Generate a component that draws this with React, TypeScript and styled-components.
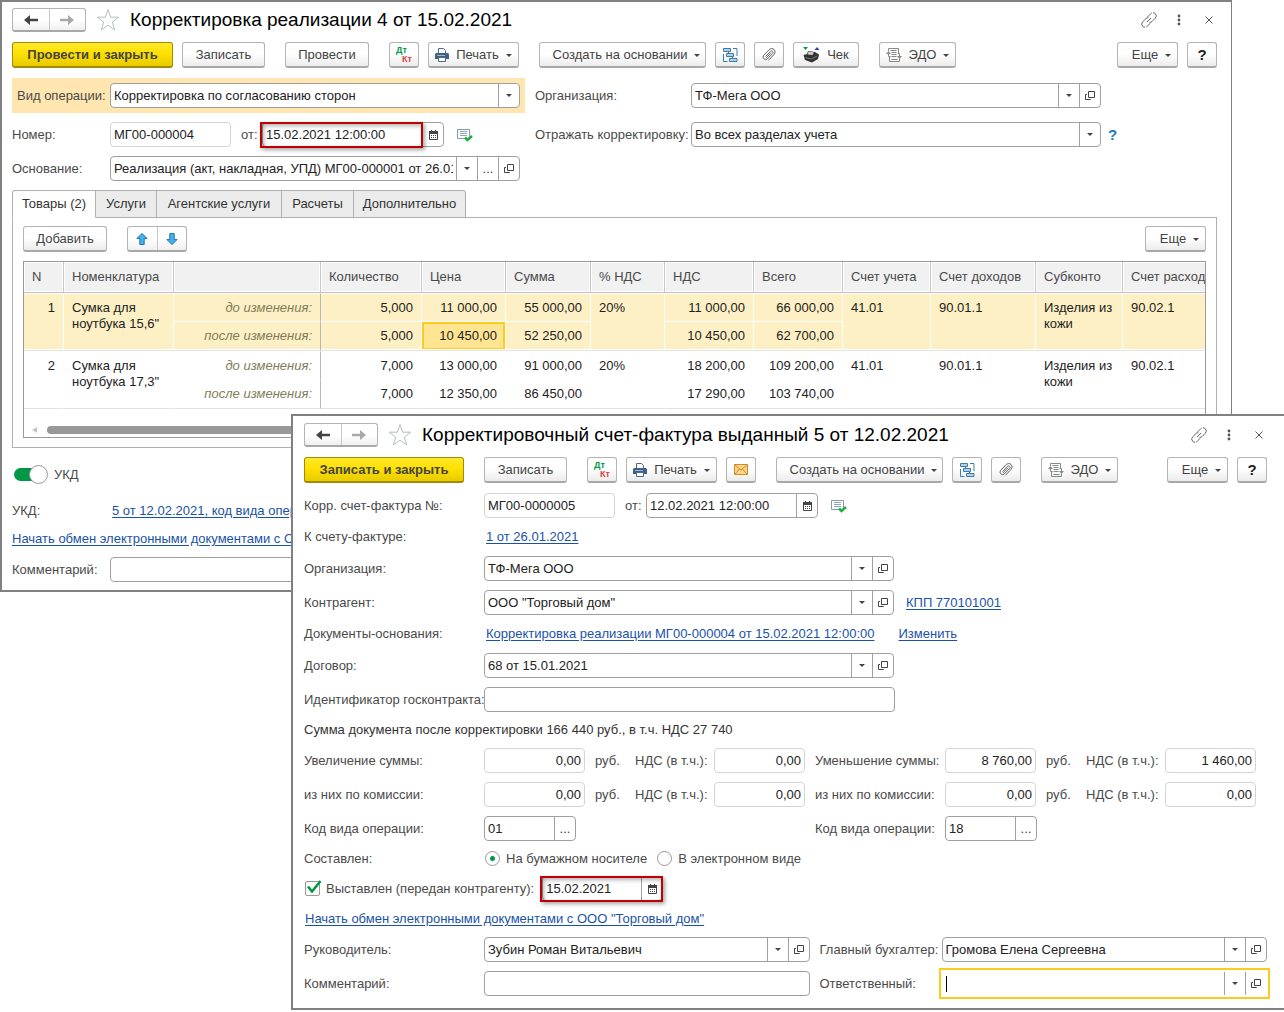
import React from 'react';
import styled, { createGlobalStyle, css } from 'styled-components';

const GlobalStyle = createGlobalStyle`
  *, *::before, *::after { box-sizing: border-box; }
  body { margin: 0; background: #fff; }
  body, button, input, select {
    font-family: "Liberation Sans", Arial, sans-serif;
    font-size: 13px;
    line-height: 16px;
  }
`;

/* ---------- windows ---------- */

const Desktop = styled.div`
  position: relative;
  min-height: 100vh;
  overflow: hidden;
  color: #333;
`;

const BackWindow = styled.section`
  width: calc(100% - 52px);
  border: solid #808080;
  border-width: 2px 1px 2px 2px;
  padding: 6px 14px 8px 10px;
  background: #fff;
`;

const FrontWindow = styled.section`
  position: absolute;
  top: 414px;
  left: 291px;
  right: 0;
  border: solid #808080;
  border-width: 2px 0 2px 2px;
  padding: 7px 17px 12px 11px;
  background: #fff;
`;

const TitleBar = styled.header`
  display: flex;
  align-items: center;
  height: 24px;
  margin-bottom: 10px;
`;

const NavGroup = styled.div`
  display: flex;
  width: 74px;
  height: 24px;
  border: 1px solid #b4b4b4;
  border-bottom: 2px solid #a8a8a8;
  border-radius: 3px;
  background: linear-gradient(#fff 50%, #f0f0f0);
`;

const NavButton = styled.button`
  flex: 1;
  display: grid;
  place-items: center;
  padding: 0;
  border: 0;
  background: none;
  & + & { border-left: 1px solid #c8c8c8; }
`;

const PlainButton = styled.button`
  display: grid;
  place-items: center;
  width: 16px;
  height: 24px;
  padding: 0;
  border: 0;
  background: none;
  color: #4d4d4d;
`;

const StarButton = styled(PlainButton)`
  width: 24px;
  margin: 0 10px;
`;

const Title = styled.h1`
  flex: 1;
  margin: 0;
  font-size: 19px;
  font-weight: 400;
  line-height: 24px;
  color: #000;
  white-space: nowrap;
`;

const WindowTools = styled.div`
  display: flex;
  gap: 14px;
`;

/* ---------- toolbar ---------- */

const Toolbar = styled.div`
  display: flex;
  gap: 9px;
  height: 26px;
  margin-bottom: 10px;
`;

const ToolGroup = styled.div<{ $push?: boolean }>`
  display: flex;
  gap: 9px;
  margin-left: ${p => (p.$push ? 'auto' : '11px')};
  &:first-child { margin-left: 0; }
`;

const Button = styled.button<{ $w: number; $primary?: boolean; $strong?: boolean; $menu?: boolean }>`
  display: flex;
  align-items: center;
  justify-content: center;
  gap: 7px;
  width: ${p => p.$w}px;
  height: 26px;
  padding: 0 0 0 ${p => (p.$menu ? 8 : 0)}px;
  border: 1px solid #b4b4b4;
  border-bottom: 2px solid #a8a8a8;
  border-radius: 3px;
  background: linear-gradient(#fff 45%, #ececec);
  color: #444;
  white-space: nowrap;
  ${p => p.$strong && css`
    font-size: 15px;
    font-weight: 700;
    color: #222;
  `}
  ${p => p.$primary && css`
    border-color: #a28b00;
    background: linear-gradient(#ffe92e, #ffe000 45%, #e8cb00);
    font-weight: 700;
  `}
`;

const Caret = styled.span<{ $tight?: boolean }>`
  width: 0;
  height: 0;
  border: solid transparent;
  border-width: 3px 3px 0;
  border-top-color: #444;
  ${p => !p.$tight && 'margin-top: 2px;'}
`;

/* ---------- form parts ---------- */

const Form = styled.div`
  display: flex;
  flex-direction: column;
  gap: 9px;
`;

const Row = styled.div<{ $h?: number }>`
  display: flex;
  align-items: center;
  height: ${p => p.$h ?? 25}px;
`;

const TwoColumns = styled.div`
  display: grid;
  grid-template-columns: 513px 1fr;
  column-gap: 10px;
  align-items: center;
`;

const Band = styled.div`
  display: flex;
  align-items: center;
  height: 35px;
  padding: 0 5px;
  background: #ffe5b0;
`;

const caption = css<{ $w?: number; $pad?: number }>`
  flex: none;
  width: ${p => (p.$w ? `${p.$w}px` : 'auto')};
  padding-left: ${p => p.$pad ?? 0}px;
  color: #4a4a4a;
  white-space: nowrap;
`;

const Label = styled.label<{ $w?: number; $pad?: number }>`${caption}`;
const Caption = styled.span<{ $w?: number; $pad?: number }>`${caption}`;

const Box = styled.div<{ $w?: number; $muted?: boolean; $focused?: boolean }>`
  position: relative;
  display: flex;
  align-items: stretch;
  ${p => (p.$w ? `flex: none; width: ${p.$w}px;` : 'flex: 1; min-width: 0;')}
  height: 25px;
  border: 1px solid ${p => (p.$muted ? '#d4d4d4' : '#a0a0a0')};
  border-radius: 4px;
  background: #fff;
  ${p => p.$focused && css`
    border-color: transparent;
    border-radius: 0;
    outline: 2px solid #fbcb1e;
    outline-offset: 1px;
  `}
`;

const TextCursor = styled.span`
  flex: none;
  align-self: center;
  width: 1px;
  height: 16px;
  margin-left: 3px;
  background: #000;
`;

const Input = styled.input<{ $right?: boolean }>`
  flex: 1;
  min-width: 0;
  padding: 0 3px;
  border: 0;
  outline: 0;
  background: none;
  color: #222;
  text-align: ${p => (p.$right ? 'right' : 'left')};
`;

const Select = styled.select`
  flex: 1;
  min-width: 0;
  padding: 0 3px;
  border: 0;
  outline: 0;
  appearance: none;
  background: none;
  color: #222;
`;

const cell = css`
  flex: none;
  display: grid;
  place-items: center;
  width: 21px;
  padding: 0;
  border: 0;
  border-left: 1px solid #a0a0a0;
  background: none;
  color: #444;
`;

const CellButton = styled.button`${cell}`;
const CellMark = styled.span`${cell} pointer-events: none;`;

const Highlight = styled.span<{ $w: number }>`
  position: absolute;
  top: -1px;
  left: -3px;
  width: ${p => p.$w}px;
  height: 26px;
  border: 2px solid #c00000;
  box-shadow: 2px 2px 4px rgba(0, 0, 0, 0.35), inset 2px 2px 4px rgba(0, 0, 0, 0.3);
  pointer-events: none;
`;

const Link = styled.a<{ $gap?: number }>`
  margin-left: ${p => p.$gap ?? 0}px;
  color: #1a52a8;
  text-decoration: underline;
  text-underline-offset: 2px;
  white-space: nowrap;
`;

const HelpLink = styled.a`
  margin-left: 7px;
  font-size: 15px;
  font-weight: 700;
  color: #1a7bc4;
  text-decoration: none;
`;

const IconSlot = styled.span`
  display: grid;
  margin-left: 13px;
`;

const DateSlot = styled.span`
  display: grid;
  margin-left: 8px;
`;

/* ---------- tabs and table ---------- */

const TabList = styled.div`
  display: flex;
  height: 28px;
  margin: 9px 0 -1px;
`;

const Tab = styled.button<{ $w: number; $active?: boolean }>`
  width: ${p => p.$w}px;
  padding: 0;
  border: 1px solid #b0b0b0;
  border-left-width: 0;
  background: #ebebeb;
  color: #333;
  white-space: nowrap;
  &:first-child { border-left-width: 1px; border-top-left-radius: 3px; }
  &:last-child { border-top-right-radius: 3px; }
  ${p => p.$active && css`
    position: relative;
    border-bottom-color: #fff;
    background: #fff;
  `}
`;

const TabPanel = styled.div`
  border: 1px solid #b0b0b0;
  padding: 8px 10px 9px;
`;

const PanelTools = styled.div`
  display: flex;
  justify-content: space-between;
  margin-bottom: 9px;
`;

const PanelToolsLeft = styled.div`
  display: flex;
  gap: 20px;
`;

const MoveGroup = styled(NavGroup)`
  width: 60px;
  height: 26px;
`;

const TableFrame = styled.div`
  overflow: hidden;
  border: 1px solid #9a9a9a;
`;

const Table = styled.table`
  width: 1208px;
  table-layout: fixed;
  border-collapse: separate;
  border-spacing: 0;
`;

const Th = styled.th`
  height: 31px;
  padding: 0 8px;
  border-right: 1px solid #c8c8c8;
  border-bottom: 1px solid #c0c0c0;
  box-shadow: inset 0 0 0 1px #fff;
  background: #f1f1f1;
  color: #4a4a4a;
  font-weight: 400;
  text-align: left;
  white-space: nowrap;
`;

const Td = styled.td<{
  $sel?: boolean; $top?: boolean; $end?: boolean; $num?: boolean; $note?: boolean; $current?: boolean;
}>`
  height: 29px;
  padding: 6px 8px 0;
  border: 0 solid #fff;
  border-right-width: 1px;
  border-top-width: ${p => (p.$top ? 1 : 0)}px;
  border-bottom: 1px solid ${p => (p.$end ? '#e2e2e2' : '#fff')};
  ${p => p.$end && 'box-shadow: inset 0 -1px #fff;'}
  background: ${p => (p.$sel ? '#fdf0c5' : '#fff')};
  color: #222;
  text-align: ${p => (p.$num ? 'right' : 'left')};
  vertical-align: top;
  ${p => p.$note && css`
    border-right-color: #b8b8b8;
    color: #827c58;
    font-style: italic;
    text-align: right;
  `}
  ${p => p.$current && css`
    background: #ffe591;
    box-shadow: inset 0 -1px #fff, inset 0 0 0 2px #fbcb1e;
  `}
`;

const ScrollRow = styled.div`
  display: flex;
  align-items: center;
  gap: 10px;
  padding: 17px 10px 3px 8px;
`;

const ScrollArrow = styled.span`
  border: solid transparent;
  border-width: 3px 5px 3px 0;
  border-right-color: #c4c4c4;
`;

const ScrollThumb = styled.div`
  width: 75%;
  height: 8px;
  border-radius: 4px;
  background: #999;
`;

/* ---------- footer and choices ---------- */

const Footer = styled.div`
  display: flex;
  flex-direction: column;
  gap: 8px;
  margin-top: 17px;
`;

const SwitchLabel = styled.label`
  display: flex;
  align-items: center;
  gap: 6px;
  height: 19px;
  margin: 0 0 9px 2px;
  color: #4a4a4a;
`;

const Switch = styled.input`
  appearance: none;
  display: grid;
  align-items: center;
  width: 34px;
  height: 19px;
  margin: 0;
  &::before {
    content: "";
    grid-area: 1 / 1;
    width: 28px;
    height: 13px;
    border-radius: 7px;
    background: #009846;
  }
  &::after {
    content: "";
    grid-area: 1 / 1;
    justify-self: end;
    width: 19px;
    height: 19px;
    border: 1px solid #999;
    border-radius: 50%;
    background: #fff;
  }
`;

const ChoiceLabel = styled.label<{ $gap?: number }>`
  display: flex;
  align-items: center;
  gap: 6px;
  margin-left: ${p => p.$gap ?? 0}px;
  color: #4a4a4a;
  white-space: nowrap;
`;

const Radio = styled.input`
  appearance: none;
  width: 15px;
  height: 15px;
  margin: 0;
  border: 1px solid #999;
  border-radius: 50%;
  background: #fff;
  &:checked { background: radial-gradient(circle, #009846 0 2px, #fff 3px); }
`;

const CheckWrap = styled.span`
  display: grid;
  width: 15px;
  height: 15px;
  & > * { grid-area: 1 / 1; }
  & > svg { overflow: visible; pointer-events: none; }
`;

const CheckInput = styled.input`
  appearance: none;
  width: 15px;
  height: 15px;
  margin: 0;
  border: 1px solid #999;
  border-radius: 2px;
`;

const SumGrid = styled.div`
  display: grid;
  grid-template-columns: 180px 101px 50px 79px 91px 140px 91px 50px 79px 91px;
  align-items: center;
  height: 25px;
`;

const SumBox = styled(Box)<{ $col?: number }>`
  ${p => p.$col && `grid-column: ${p.$col};`}
`;

const SecondCodeLabel = styled(Label)`
  grid-column: 6;
`;

/* ---------- icons ---------- */

const Arrow = ({ right }: { right?: boolean }) => (
  <svg width="14" height="12" viewBox="0 0 14 12" aria-hidden="true">
    {right
      ? <path d="M0 4.8h8V1l6 5-6 5V7.2H0z" fill="#a8a8a8" />
      : <path d="M14 4.8H6V1L0 6l6 5V7.2h8z" fill="#444" />}
  </svg>
);

const StarIcon = () => (
  <svg width="24" height="24" viewBox="0 0 24 24" aria-hidden="true">
    <path d="M12 1.5l2.7 7.7h8l-6.4 4.9 2.4 7.9-6.7-4.8L5.3 22l2.4-7.9L1.3 9.2h8z" fill="#fff" stroke="#b4bcc4" />
  </svg>
);

const ChainIcon = () => (
  <svg width="16" height="16" viewBox="0 0 16 16" fill="none" stroke="#666" aria-hidden="true">
    <path d="M6.5 5l3.3-3.300a3 3 0 0 1 4.500 4.500L11 9.500a3 3 0 0 1-2.500.8M9.500 11l-3.300 3.300a3 3 0 0 1-4.500-4.500L5 6.500a3 3 0 0 1 2.500-.8M6 10l4-4" strokeDasharray="6 1 20 1" />
  </svg>
);

const DotsIcon = () => (
  <svg width="4" height="12" viewBox="0 0 4 12" fill="#555" aria-hidden="true">
    <circle cx="2" cy="2" r="1.4" /><circle cx="2" cy="6" r="1.4" /><circle cx="2" cy="10" r="1.4" />
  </svg>
);

const CloseIcon = () => (
  <svg width="8" height="8" viewBox="0 0 8 8" stroke="#555" aria-hidden="true">
    <path d="M.5.5l7 7M7.5.5l-7 7" />
  </svg>
);

const PostingBadge = styled.span`
  display: grid;
  width: 16px;
  font-size: 9px;
  font-weight: 700;
  line-height: 9px;
  color: #009846;
  text-align: left;
`;

const PostingCredit = styled.span`
  color: #e04040;
  text-align: right;
`;

const PrinterIcon = () => (
  <svg width="14" height="14" viewBox="0 0 14 14" aria-hidden="true">
    <path d="M3.5 5V.5h5l2 2V5" fill="#fff" stroke="#4a6a8a" />
    <path d="M1.5 5h11A1.5 1.5 0 0 1 14 6.5V11H0V6.5A1.5 1.5 0 0 1 1.5 5z" fill="#3f6184" />
    <path d="M2 7.5h8" stroke="#9fb6cc" />
    <path d="M3.5 9.5h7v4h-7z" fill="#fff" stroke="#4a6a8a" />
  </svg>
);

const StructureIcon = () => (
  <svg width="15" height="14" viewBox="0 0 15 14" fill="none" stroke="#3d7dad" aria-hidden="true">
    <path d="M10 .5h4v7.500M.5 6v7.500h4M5.500 3.500v2M9.500 8.500v2" />
    <path d="M.5.5h7v3h-7zM3.500 5.500h7v3h-7zM6.500 10.500h7.500v3H6.500z" fill="#b0d0e8" />
  </svg>
);

const ClipIcon = () => (
  <svg width="14" height="14" viewBox="0 0 14 14" fill="none" stroke="#666" aria-hidden="true">
    <path d="M3.500 8.500l5-5.200a1.500 1.500 0 0 1 2.200 2.100L5.300 11a2.600 2.600 0 0 1-3.700-3.600l5.800-6a3.400 3.400 0 0 1 4.900 4.700L6.500 12.300" />
    <path d="M4.200 9.800l5-5.200" />
  </svg>
);

const ReceiptIcon = () => (
  <svg width="17" height="16" viewBox="0 0 17 16" aria-hidden="true">
    <path d="M0 0h5L2.500 3z" fill="#00a050" />
    <path d="M11.500 3h5L14 0z" fill="#3040c0" />
    <path d="M.5 8L4 7l1-3 7 1 4 2.500-1 4.500-6 3.500L2 13z" fill="#333" />
    <path d="M5.500 4.500l5.500 1-1.500 2.500-5-.5z" fill="#ccc" />
    <path d="M2.500 10.500l6 1.500 5.500-3" stroke="#777" fill="none" />
  </svg>
);

const EdiIcon = () => (
  <svg width="16" height="16" viewBox="0 0 16 16" fill="none" stroke="#888" aria-hidden="true">
    <path d="M2.500 4V1.500h10V6M13.500 12v2.500h-10V10M4.500 3.500h6M5.500 5.500h5M5.500 7.500h5M5.500 9.500h5M5.500 12.500h6" />
    <path d="M2.500 7v2.500h2M13.500 9V6.500h-2" />
    <path d="M2.500 4L5 7H0zM13.500 12L11 9h5z" fill="#888" stroke="none" />
  </svg>
);

const MailIcon = () => (
  <svg width="14" height="11" viewBox="0 0 14 11" aria-hidden="true">
    <path d="M.5.5h13v10H.5z" fill="#fbd58a" stroke="#d08a28" />
    <path d="M1 1l6 5 6-5M1 10l4.5-5M13 10L8.5 5" fill="none" stroke="#d08a28" />
  </svg>
);

const CalendarIcon = () => (
  <svg width="9" height="10" viewBox="0 0 9 10" aria-hidden="true">
    <path d="M.5 1.5h8v8h-8z" fill="#fff" stroke="#444" />
    <path d="M0 1h9v3H0zM2 0h1v2H2zM6 0h1v2H6z" fill="#444" />
    <path d="M2 5.5h1M4 5.5h1M6 5.5h1M2 7.5h1M4 7.5h1M6 7.5h1" stroke="#444" />
  </svg>
);

const OpenIcon = () => (
  <svg width="10" height="10" viewBox="0 0 10 10" fill="none" stroke="#444" aria-hidden="true">
    <path d="M3.5.5h6v6h-6zM2 3.5H.5v5h5V8" />
  </svg>
);

const PostedIcon = () => (
  <svg width="16" height="14" viewBox="0 0 16 14" fill="none" aria-hidden="true">
    <path d="M.5 1.5h12v9H.5z" stroke="#8899b0" fill="#fff" />
    <path d="M3 3.5h7M3 5.5h7M3 7.5h7" stroke="#8ca8c0" />
    <path d="M8 9.500l2.500 2.500L15 8" stroke="#20b040" strokeWidth="2.500" />
  </svg>
);

const MoveIcon = ({ down }: { down?: boolean }) => (
  <svg width="12" height="12" viewBox="0 0 12 12" aria-hidden="true">
    <path
      d={down ? 'M6 11.5L.8 6.5h3v-6h4.4v6h3z' : 'M6 .5L.8 5.5h3v6h4.4v-6h3z'}
      fill="#3fb0f0" stroke="#2878a8"
    />
  </svg>
);

const CheckIcon = () => (
  <svg width="15" height="15" viewBox="0 0 15 15" fill="none" aria-hidden="true">
    <path d="M3 5.500l4 5L15.500 0" stroke="#009846" strokeWidth="2.500" />
  </svg>
);

/* ---------- composed controls ---------- */

type FieldProps = {
  id: string; value?: string; w?: number; muted?: boolean; right?: boolean; focused?: boolean;
  tools?: Array<'drop' | 'more' | 'open' | 'date'>; mark?: number; col?: number;
};

const toolNames = { drop: 'Выбрать из списка', more: 'Показать все', open: 'Открыть', date: 'Календарь' };

function Field({ id, value = '', w, muted, right, focused, tools = [], mark, col }: FieldProps) {
  return (
    <SumBox $w={w} $muted={muted} $focused={focused} $col={col}>
      {focused && <TextCursor />}
      <Input id={id} defaultValue={value} $right={right} readOnly={muted} />
      {tools.map(t => (
        <CellButton key={t} type="button" aria-label={toolNames[t]}>
          {t === 'drop' && <Caret $tight />}
          {t === 'more' && '...'}
          {t === 'open' && <OpenIcon />}
          {t === 'date' && <CalendarIcon />}
        </CellButton>
      ))}
      {mark && <Highlight $w={mark} />}
    </SumBox>
  );
}

function Choice({ id, value, w }: { id: string; value: string; w: number }) {
  return (
    <Box $w={w}>
      <Select id={id}><option>{value}</option></Select>
      <CellMark><Caret $tight /></CellMark>
    </Box>
  );
}

function WindowTitle({ children }: { children: React.ReactNode }) {
  return (
    <TitleBar>
      <NavGroup>
        <NavButton type="button" aria-label="Назад"><Arrow /></NavButton>
        <NavButton type="button" aria-label="Вперед"><Arrow right /></NavButton>
      </NavGroup>
      <StarButton type="button" aria-label="В избранное"><StarIcon /></StarButton>
      <Title>{children}</Title>
      <WindowTools>
        <PlainButton type="button" aria-label="Получить ссылку"><ChainIcon /></PlainButton>
        <PlainButton type="button" aria-label="Меню"><DotsIcon /></PlainButton>
        <PlainButton type="button" aria-label="Закрыть"><CloseIcon /></PlainButton>
      </WindowTools>
    </TitleBar>
  );
}

const PostingButton = () => (
  <Button $w={30} type="button">
    <PostingBadge>Дт<PostingCredit>Кт</PostingCredit></PostingBadge>
  </Button>
);
const PrintButton = () => <Button $w={91} type="button"><PrinterIcon />Печать<Caret /></Button>;
const CreateButton = () => <Button $w={167} $menu type="button">Создать на основании<Caret /></Button>;
const StructureButton = () => <Button $w={30} type="button" aria-label="Структура подчиненности"><StructureIcon /></Button>;
const ClipButton = () => <Button $w={30} type="button" aria-label="Присоединенные файлы"><ClipIcon /></Button>;
const EdiButton = () => <Button $w={77} type="button"><EdiIcon />ЭДО<Caret /></Button>;
const MoreButton = () => <Button $w={61} $menu type="button">Еще<Caret /></Button>;

/* ---------- data ---------- */

const columnWidths = [40, 110, 147, 101, 84, 85, 74, 89, 89, 88, 105, 87];
const columns = ['N', 'Номенклатура', '', 'Количество', 'Цена', 'Сумма', '% НДС', 'НДС', 'Всего',
  'Счет учета', 'Счет доходов', 'Субконто', 'Счет расходов'];

const goods = [
  {
    n: 1, name: 'Сумка для ноутбука 15,6"', vatRate: '20%', selected: true,
    before: ['5,000', '11 000,00', '55 000,00', '11 000,00', '66 000,00'],
    after: ['5,000', '10 450,00', '52 250,00', '10 450,00', '62 700,00'],
  },
  {
    n: 2, name: 'Сумка для ноутбука 17,3"', vatRate: '20%', selected: false,
    before: ['7,000', '13 000,00', '91 000,00', '18 200,00', '109 200,00'],
    after: ['7,000', '12 350,00', '86 450,00', '17 290,00', '103 740,00'],
  },
];

const sums = [
  { id: 'inc', up: 'Увеличение суммы:', down: 'Уменьшение суммы:', v: ['0,00', '0,00', '8 760,00', '1 460,00'] },
  { id: 'com', up: 'из них по комиссии:', down: 'из них по комиссии:', v: ['0,00', '0,00', '0,00', '0,00'] },
];

const tabs: Array<[string, number]> = [
  ['Товары (2)', 84], ['Услуги', 61], ['Агентские услуги', 125], ['Расчеты', 72], ['Дополнительно', 112],
];

function GoodsTable() {
  return (
    <TableFrame>
      <Table>
        <colgroup>
          {columnWidths.map((w, i) => <col key={i} width={w} />)}
          <col />
        </colgroup>
        <thead>
          <tr>{columns.map((c, i) => <Th key={i}>{c}</Th>)}</tr>
        </thead>
        <tbody>
          {goods.map(g => {
            const full = { rowSpan: 2, $sel: g.selected, $top: true, $end: true };
            const top = { $sel: g.selected, $top: true };
            const end = { $sel: g.selected, $end: true };
            return (
              <React.Fragment key={g.n}>
                <tr>
                  <Td {...full} $num>{g.n}</Td>
                  <Td {...full}>{g.name}</Td>
                  <Td {...top} $note>до изменения:</Td>
                  {g.before.slice(0, 3).map((v, i) => <Td key={i} {...top} $num>{v}</Td>)}
                  <Td {...full}>{g.vatRate}</Td>
                  {g.before.slice(3).map((v, i) => <Td key={i} {...top} $num>{v}</Td>)}
                  <Td {...full}>41.01</Td>
                  <Td {...full}>90.01.1</Td>
                  <Td {...full}>Изделия из кожи</Td>
                  <Td {...full}>90.02.1</Td>
                </tr>
                <tr>
                  <Td {...end} $note>после изменения:</Td>
                  {g.after.map((v, i) => (
                    <Td key={i} {...end} $num $current={g.selected && i === 1}>{v}</Td>
                  ))}
                </tr>
              </React.Fragment>
            );
          })}
        </tbody>
      </Table>
      <ScrollRow><ScrollArrow /><ScrollThumb /></ScrollRow>
    </TableFrame>
  );
}

function SalesCorrection() {
  return (
    <BackWindow>
      <WindowTitle>Корректировка реализации 4 от 15.02.2021</WindowTitle>
      <Toolbar>
        <ToolGroup>
          <Button $w={161} $primary type="button">Провести и закрыть</Button>
          <Button $w={83} type="button">Записать</Button>
        </ToolGroup>
        <ToolGroup><Button $w={84} type="button">Провести</Button></ToolGroup>
        <ToolGroup><PostingButton /><PrintButton /></ToolGroup>
        <ToolGroup>
          <CreateButton /><StructureButton /><ClipButton />
          <Button $w={66} type="button"><ReceiptIcon />Чек</Button>
        </ToolGroup>
        <ToolGroup><EdiButton /></ToolGroup>
        <ToolGroup $push><MoreButton /><Button $w={30} $strong type="button">?</Button></ToolGroup>
      </Toolbar>

      <Form>
        <TwoColumns>
          <Band>
            <Label htmlFor="kind" $w={93}>Вид операции:</Label>
            <Choice id="kind" value="Корректировка по согласованию сторон" w={410} />
          </Band>
          <Row>
            <Label htmlFor="org" $w={156}>Организация:</Label>
            <Field id="org" value="ТФ-Мега ООО" w={410} tools={['drop', 'open']} />
          </Row>
        </TwoColumns>
        <TwoColumns>
          <Row>
            <Label htmlFor="num" $w={98}>Номер:</Label>
            <Field id="num" value="МГ00-000004" w={121} muted />
            <Label htmlFor="date" $w={31} $pad={10}>от:</Label>
            <Field id="date" value="15.02.2021 12:00:00" w={182} tools={['date']} mark={163} />
            <IconSlot><PostedIcon /></IconSlot>
          </Row>
          <Row>
            <Label htmlFor="reflect" $w={156}>Отражать корректировку:</Label>
            <Choice id="reflect" value="Во всех разделах учета" w={410} />
            <HelpLink href="#help">?</HelpLink>
          </Row>
        </TwoColumns>
        <Row>
          <Label htmlFor="base" $w={98}>Основание:</Label>
          <Field id="base" value="Реализация (акт, накладная, УПД) МГ00-000001 от 26.01" w={410} tools={['drop', 'more', 'open']} />
        </Row>
      </Form>

      <TabList role="tablist">
        {tabs.map(([name, w], i) => (
          <Tab key={name} role="tab" type="button" $w={w} $active={i === 0} aria-selected={i === 0}>{name}</Tab>
        ))}
      </TabList>
      <TabPanel role="tabpanel">
        <PanelTools>
          <PanelToolsLeft>
            <Button $w={84} type="button">Добавить</Button>
            <MoveGroup>
              <NavButton type="button" aria-label="Переместить вверх"><MoveIcon /></NavButton>
              <NavButton type="button" aria-label="Переместить вниз"><MoveIcon down /></NavButton>
            </MoveGroup>
          </PanelToolsLeft>
          <MoreButton />
        </PanelTools>
        <GoodsTable />
      </TabPanel>

      <Footer>
        <SwitchLabel><Switch type="checkbox" role="switch" defaultChecked />УКД</SwitchLabel>
        <Row $h={20}>
          <Caption $w={100}>УКД:</Caption>
          <Link href="#ukd">5 от 12.02.2021, код вида операции</Link>
        </Row>
        <Row $h={20}>
          <Link href="#edi">Начать обмен электронными документами с ООО</Link>
        </Row>
        <Row>
          <Label htmlFor="note" $w={98}>Комментарий:</Label>
          <Field id="note" w={410} />
        </Row>
      </Footer>
    </BackWindow>
  );
}

function InvoiceCorrection() {
  return (
    <FrontWindow>
      <WindowTitle>Корректировочный счет-фактура выданный 5 от 12.02.2021</WindowTitle>
      <Toolbar>
        <ToolGroup><Button $w={160} $primary type="button">Записать и закрыть</Button></ToolGroup>
        <ToolGroup><Button $w={83} type="button">Записать</Button></ToolGroup>
        <ToolGroup>
          <PostingButton /><PrintButton />
          <Button $w={30} type="button" aria-label="Отправить по почте"><MailIcon /></Button>
        </ToolGroup>
        <ToolGroup><CreateButton /><StructureButton /><ClipButton /></ToolGroup>
        <ToolGroup><EdiButton /></ToolGroup>
        <ToolGroup $push><MoreButton /><Button $w={30} $strong type="button">?</Button></ToolGroup>
      </Toolbar>

      <Form>
        <Row>
          <Label htmlFor="inv" $w={180}>Корр. счет-фактура №:</Label>
          <Field id="inv" value="МГ00-0000005" w={131} muted />
          <Label htmlFor="invdate" $w={31} $pad={10}>от:</Label>
          <Field id="invdate" value="12.02.2021 12:00:00" w={172} tools={['date']} />
          <IconSlot><PostedIcon /></IconSlot>
        </Row>
        <Row $h={20}>
          <Caption $w={182}>К счету-фактуре:</Caption>
          <Link href="#invoice">1 от 26.01.2021</Link>
        </Row>
        <Row>
          <Label htmlFor="org2" $w={180}>Организация:</Label>
          <Field id="org2" value="ТФ-Мега ООО" w={410} tools={['drop', 'open']} />
        </Row>
        <Row>
          <Label htmlFor="partner" $w={180}>Контрагент:</Label>
          <Field id="partner" value={'ООО "Торговый дом"'} w={410} tools={['drop', 'open']} />
          <Link href="#kpp" $gap={12}>КПП 770101001</Link>
        </Row>
        <Row $h={20}>
          <Caption $w={182}>Документы-основания:</Caption>
          <Link href="#doc">Корректировка реализации МГ00-000004 от 15.02.2021 12:00:00</Link>
          <Link href="#change" $gap={24}>Изменить</Link>
        </Row>
        <Row>
          <Label htmlFor="contract" $w={180}>Договор:</Label>
          <Field id="contract" value="68 от 15.01.2021" w={410} tools={['drop', 'open']} />
        </Row>
        <Row>
          <Label htmlFor="gov" $w={180}>Идентификатор госконтракта:</Label>
          <Field id="gov" w={411} />
        </Row>
        <Row $h={18}>Сумма документа после корректировки 166 440 руб., в т.ч. НДС 27 740</Row>
        {sums.map(s => (
          <SumGrid key={s.id}>
            <Label htmlFor={`${s.id}1`}>{s.up}</Label>
            <Field id={`${s.id}1`} value={s.v[0]} w={101} muted right />
            <Caption $pad={10}>руб.</Caption>
            <Label htmlFor={`${s.id}2`}>НДС (в т.ч.):</Label>
            <Field id={`${s.id}2`} value={s.v[1]} w={91} muted right />
            <Label htmlFor={`${s.id}3`} $pad={10}>{s.down}</Label>
            <Field id={`${s.id}3`} value={s.v[2]} w={91} muted right />
            <Caption $pad={10}>руб.</Caption>
            <Label htmlFor={`${s.id}4`}>НДС (в т.ч.):</Label>
            <Field id={`${s.id}4`} value={s.v[3]} w={91} muted right />
          </SumGrid>
        ))}
        <SumGrid>
          <Label htmlFor="code1">Код вида операции:</Label>
          <Field id="code1" value="01" w={92} tools={['more']} />
          <SecondCodeLabel htmlFor="code2" $pad={10}>Код вида операции:</SecondCodeLabel>
          <Field id="code2" value="18" w={92} tools={['more']} col={7} />
        </SumGrid>
        <Row $h={17}>
          <Caption $w={181}>Составлен:</Caption>
          <ChoiceLabel><Radio type="radio" name="form" defaultChecked />На бумажном носителе</ChoiceLabel>
          <ChoiceLabel $gap={10}><Radio type="radio" name="form" />В электронном виде</ChoiceLabel>
        </Row>
        <Row>
          <ChoiceLabel $gap={1}>
            <CheckWrap><CheckInput type="checkbox" id="issued" defaultChecked /><CheckIcon /></CheckWrap>
            Выставлен (передан контрагенту):
          </ChoiceLabel>
          <DateSlot>
            <Field id="issuedDate" value="15.02.2021" w={121} tools={['date']} mark={123} />
          </DateSlot>
        </Row>
        <Row $h={18}>
          <Link href="#edi2" $gap={1}>Начать обмен электронными документами с ООО "Торговый дом"</Link>
        </Row>
        <Row>
          <Label htmlFor="head" $w={180}>Руководитель:</Label>
          <Field id="head" value="Зубин Роман Витальевич" tools={['drop', 'open']} />
          <Label htmlFor="acc" $w={132} $pad={10}>Главный бухгалтер:</Label>
          <Field id="acc" value="Громова Елена Сергеевна" tools={['drop', 'open']} />
        </Row>
        <Row>
          <Label htmlFor="note2" $w={180}>Комментарий:</Label>
          <Field id="note2" />
          <Label htmlFor="resp" $w={132} $pad={10}>Ответственный:</Label>
          <Field id="resp" tools={['drop', 'open']} focused />
        </Row>
      </Form>
    </FrontWindow>
  );
}

export default function App() {
  return (
    <>
      <GlobalStyle />
      <Desktop>
        <SalesCorrection />
        <InvoiceCorrection />
      </Desktop>
    </>
  );
}
